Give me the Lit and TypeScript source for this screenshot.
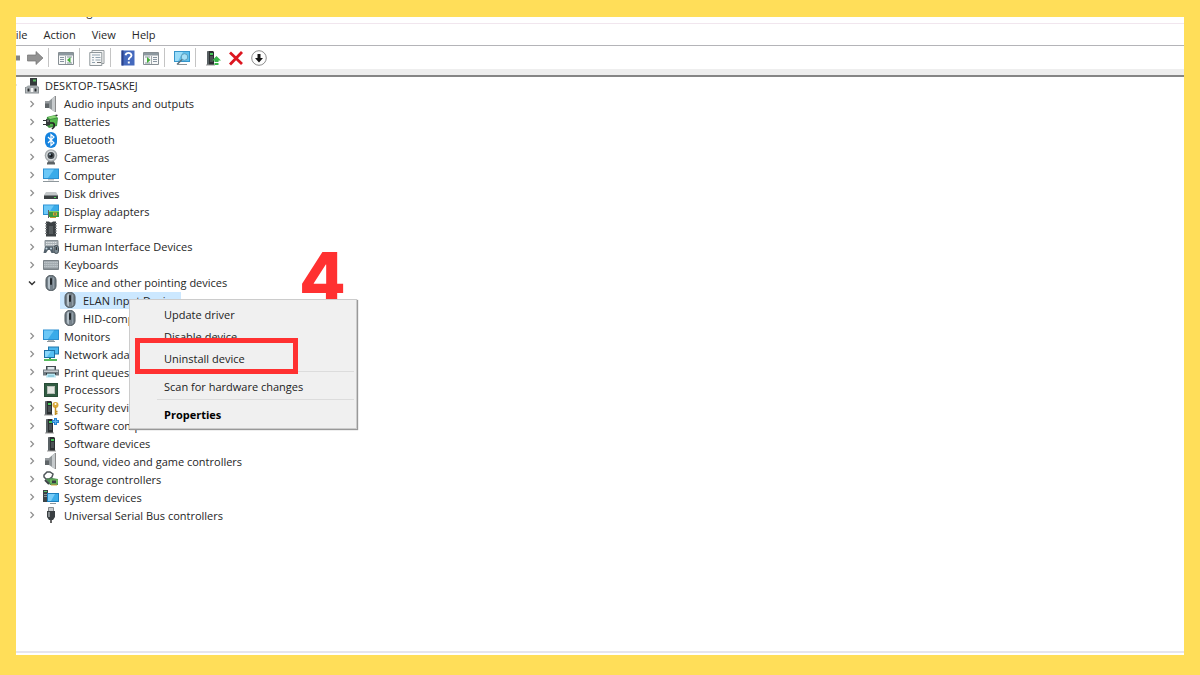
import { LitElement, html, css, svg, nothing } from "lit";
import { customElement, property, state } from "lit/decorators.js";
import { classMap } from "lit/directives/class-map.js";

const tower = (x: number) => svg`
  <path d="M${x} 2l1-1h5l1 1v13h-7z" fill="#2b2f31"/>
  <path d="M${x} 2l1-1h1v14h-2z" fill="#596164"/>
  <path d="M${x + 3} 3h3v2h-3z" fill="#48c75a"/>
  <path d="M${x + 3} 7h3M${x + 3} 9h3M${x + 3} 11h3" stroke="#6d7578"/>
  <path d="M${x - 1} 15h9" stroke="#999"/>`;

const screen = svg`
  <path d="M0 1.500h16v10.500H0z" fill="#2b8fd0"/>
  <path d="M1 2.500h14v8.500H1z" fill="#39abe9"/>
  <path d="M1 2.500h10l-6 8.500H1z" fill="#6cc8f7"/>`;

const mouse = svg`
  <rect x="3" y=".5" width="10" height="15" rx="4.500" fill="#75818a" stroke="#4b545a"/>
  <path d="M5 3.5Q5 2 7 1.5v13Q5 14 5 12z" fill="#b4c0c8"/>
  <path d="M10.500 2.500v11" stroke="#929ea7"/>
  <rect x="7" y="3" width="2" height="7" rx="1" fill="#23282c"/>`;

const speaker = svg`
  <path d="M2 5h4v7H2z" fill="#5f6568"/>
  <path d="M6 5l6-5v16l-6-4z" fill="#8f9598"/>
  <path d="M9 2.500L12 0v16l-3-2z" fill="#c6cacc"/>
  <path d="M12.500 0v16" stroke="#8a8a8a"/>
  <path d="M2 5h4v2.500H2z" fill="#969b9e"/>`;

const ICONS: Record<string, unknown> = {
  root: svg`
    <path d="M6 0h7v9H6z" fill="#34393b"/><path d="M9 1.500h3v2H9z" fill="#55b85f"/>
    <path d="M2 9l2-1.500h9L15 9v6H2z" fill="#a3a9ac"/><path d="M1 9h14v6.500H1z" fill="#8b9194"/>
    <path d="M2 9.500h12v5H2z" fill="#b8bdc0"/>
    <path d="M3.500 10.500h2v3h-2zM10.500 10.500h2v3h-2z" fill="#25292b"/>
    <path d="M7 10h2v4H7z" fill="#f5f5f5"/>`,
  audio: speaker,
  sound: speaker,
  battery: svg`
    <path d="M4 3l8-2 3 3-1 8-8 2-3-3z" fill="#3d9440"/><path d="M5 3l7-1.500 2 2-7 1.500z" fill="#8ad474"/>
    <path d="M7 6l7-1.500-.5 6L7 12z" fill="#54b84c"/><path d="M12 1l2-.5 1 1-2 .7z" fill="#333"/>
    <path d="M0 6h3v-1l4 1v5l-4 1v-1H0v-1h3V7H0z" fill="#33383a"/>
    <path d="M7 9h3q2 1 1 4l-2 2" fill="none" stroke="#222" stroke-width="1.500"/>
    <path d="M4 6.500h2v1H4z" fill="#aaa"/>`,
  bluetooth: svg`
    <rect x="2" y="0" width="12" height="16" rx="6" fill="#1583df"/>
    <path d="M5 5l6 6-3 2.500v-11L11 5l-6 6" fill="none" stroke="#fff" stroke-width="1.200"/>`,
  camera: svg`
    <path d="M4 14l2-3h4l2 3v1.500H4z" fill="#5c6265"/>
    <circle cx="8" cy="6.500" r="6.300" fill="#a5abae"/><circle cx="8" cy="6.500" r="4.900" fill="#d6dadc"/>
    <circle cx="8" cy="6.500" r="3.500" fill="#444b50"/><circle cx="8" cy="6.500" r="1.700" fill="#15191c"/>
    <circle cx="7" cy="5.500" r="1" fill="#9fb6c6"/>`,
  computer: svg`${screen}<path d="M5 12h6v1.500H5z" fill="#c2c6c8"/><path d="M0 14.500h16" stroke="#8e979c"/>`,
  disk: svg`
    <path d="M3 7h10l2 3H1z" fill="#c3c7c9"/><path d="M1 10h14v4H1z" fill="#3c4143"/>
    <path d="M1 10h14v1H1z" fill="#7d8386"/><path d="M11 12h2v1h-2z" fill="#4fd85a"/>`,
  display: svg`${screen}
    <path d="M6 8h10v6H6z" fill="#3a9a41"/><path d="M6 8h10v1H6z" fill="#7fcf6b"/>
    <path d="M10 9.500h4v3h-4z" fill="#d7a935"/><path d="M11 10.500h2v1h-2z" fill="#47555b"/>
    <path d="M7 14.500h6" stroke="#c29a2b"/><path d="M5.500 7v8" stroke="#5b6367"/>`,
  firmware: svg`
    <path d="M3 .5h3q2 2 4 0h3v15H3z" fill="#3b4043"/>
    <path d="M2 2.500h2M2 5h2M2 7.500h2M2 10h2M2 12.500h2M12 2.500h2M12 5h2M12 7.500h2M12 10h2M12 12.500h2" stroke="#85898b"/>
    <path d="M6 5h4v8H6z" fill="#555b5e"/>`,
  hid: svg`
    <path d="M2 1.500h13v6H2z" fill="#a9b1b6" stroke="#8a9398"/>
    <path d="M3 3.500h11M3 5.500h11" stroke="#dfe3e5" stroke-dasharray="1.500 .7"/>
    <path d="M2 7.500h8l1 6.500H8.500L7 11H5l-2 3H.5z" fill="#53616b"/>
    <circle cx="3.500" cy="9.500" r="1" fill="#c2d5e0"/><circle cx="8" cy="9.500" r="1" fill="#c2d5e0"/>
    <rect x="11" y="6.500" width="4.500" height="8" rx="2.200" fill="#7a8992" stroke="#424d54"/><path d="M13.300 8v3" stroke="#222"/>`,
  keyboard: svg`
    <path d="M.5 3.500h15v9H.5z" fill="#a3abb0" stroke="#7b8388"/>
    <path d="M1 5.500h14M1 7.500h14M1 9.500h14" stroke="#bcc4c8" stroke-dasharray="1.400 .4"/><path d="M1 11.500h14" stroke="#8b9398"/>`,
  mouse,
  monitor: svg`${screen}<path d="M5 12h6v1H5z" fill="#acb3b6"/><path d="M4 13.500h8" stroke="#8e979c"/>`,
  network: svg`
    <path d="M5 .5h11v8H5z" fill="#2078ad"/><path d="M6 1.500h9v6H6z" fill="#4db7ee"/>
    <path d="M1 4h11v8H1z" fill="#1d70a5"/><path d="M2 5h9v6H2z" fill="#56bff2"/><path d="M2 5h6l-4 6H2z" fill="#8ad7fa"/>
    <path d="M6 12h2v2H6z" fill="#3b9c45"/><path d="M1 14h13" stroke="#57bb5e" stroke-width="2"/>`,
  printer: svg`
    <path d="M3 2h10v4H3z" fill="#414a4f"/><path d="M4.500 3h7v3h-7z" fill="#dfe7ea"/>
    <path d="M0 5.500h16v6H0z" fill="#707a80"/><path d="M1 6.500h14v1.500H1z" fill="#c4cbcf"/>
    <path d="M3 9h10v2H3z" fill="#242a2d"/><path d="M4 9.500h8l1 4H3z" fill="#b6e6f2"/><path d="M5 12h6" stroke="#6eb2c7"/>`,
  processor: svg`
    <path d="M1 1h14v14H1z" fill="#315c43"/><path d="M1.500 1.500h13v13h-13z" fill="none" stroke="#274c36"/>
    <path d="M4 4h8v8H4z" fill="#b9c0b9"/><path d="M5 5h6v6H5z" fill="#e3e7e2"/>`,
  security: svg`${tower(2)}
    <circle cx="12.500" cy="5" r="3" fill="#d8a83b"/><circle cx="12.500" cy="4" r="1" fill="#fff"/>
    <path d="M12.500 7v8M12.500 11.500h2M12.500 13.500h2" stroke="#c18f25" stroke-width="1.500"/>`,
  component: svg`${tower(3)}
    <path d="M12.500 0v7M9 3.500h7" stroke="#2583d1" stroke-width="3"/>
    <path d="M12.500 1v5M10 3.500h5" stroke="#5db2ee"/>`,
  software: tower(5),
  storage: svg`
    <path d="M1 4l3-3h3l3 2-1 3-3 2H3L1 6z" fill="none" stroke="#4e5558" stroke-width="1.500"/>
    <path d="M3 8l6-1 6 1v6H7z" fill="#4b8f50"/><path d="M7 8.500h8v4H7z" fill="#71b95f"/>
    <path d="M2 9l4 4" stroke="#3c4245" stroke-width="2"/><path d="M9 9.500h4v2.500H9z" fill="#393f42"/>
    <path d="M8 14h6" stroke="#d5aa3d"/>`,
  system: svg`
    <path d="M0 1h5v12H0z" fill="#3c4447"/><path d="M1 2.500h3" stroke="#58c767"/><path d="M1 5.500h3M1 7.500h3" stroke="#899196"/>
    <path d="M4 4h12v9H4z" fill="#1c7fbd"/><path d="M5 5h10v7H5z" fill="#3daeea"/><path d="M5 5h7l-4 7H5z" fill="#79cdf8"/>
    <path d="M7 14.500h6" stroke="#8e979c"/>`,
  usb: svg`
    <path d="M5.500 .5h5v4h-5z" fill="#c7cbcd" stroke="#6e7477" stroke-width=".8"/>
    <path d="M4 4h8v6l-2 3H6l-2-3z" fill="#3a3f42"/><path d="M5 5h2v5H5z" fill="#858b8e"/>
    <path d="M8 13v3" stroke="#333" stroke-width="1.500"/>`,

  back: svg`<path d="M0 8l8-6v3.500h8v5H8V14z" fill="#858585"/>`,
  forward: svg`<path d="M16 8L9 1.500V5H.5v6H9v3.500z" fill="#929292" stroke="#717171" stroke-width=".7"/>`,
  tree: svg`
    <path d="M.5 2.500h15v12H.5z" fill="#f7f8f8" stroke="#868e93"/><path d="M1 3h14v2.500H1z" fill="#8c989f"/>
    <path d="M2 7.500h4M2 9.500h4M2 11.500h4M9 7h5M9 13h5" stroke="#8794a0"/><path d="M7.500 6v8" stroke="#a3aaae"/>
    <path d="M12.500 7v6L9 10z" fill="#42ad39"/>`,
  props: svg`
    <path d="M3 .5h12v13H3z" fill="#f5f6f6" stroke="#969c9f"/><path d="M.8 2.500h12v13H.8z" fill="#f7f8f8" stroke="#8f979b"/>
    <path d="M3 5h8M3 7.500h2M6.500 7.500h5M3 10h2M6.500 10h5M3 12.500h3" stroke="#91a3b0"/><path d="M8 12.500h4" stroke="#777"/>`,
  help: svg`
    <path d="M1.500 .5h13v15h-13z" fill="#4469bd"/><path d="M1.500 .5h2v15h-2z" fill="#2a438c"/>
    <path d="M5.500 5.200Q6 2.800 8.500 2.800T11.500 5.200Q11.500 6.500 10 7.500T8.700 10" fill="none" stroke="#fff" stroke-width="1.800"/><path d="M7.800 11.500h2v2h-2z" fill="#fff"/>`,
  action: svg`
    <path d="M.5 2.500h15v12H.5z" fill="#f7f8f8" stroke="#868e93"/><path d="M1 3h14v2.500H1z" fill="#8c989f"/>
    <path d="M10 7.500h4M10 9.500h4M10 11.500h4M2 7h5M2 13h5" stroke="#8794a0"/><path d="M8.500 6v8" stroke="#a3aaae"/>
    <path d="M4 7v6l3.500-3z" fill="#42ad39"/>`,
  scan: svg`
    <path d="M0 1h16v11H0z" fill="#3695ca"/><path d="M1 2h14v9H1z" fill="#5fc0ed"/><path d="M1 2h8l-5 9H1z" fill="#9adcf8"/>
    <path d="M4 14.500h9" stroke="#8a9297"/><circle cx="10.500" cy="7" r="3.300" fill="#a6e0f7" stroke="#5f9dba"/>
    <path d="M8 9.500l-5 5" stroke="#5b6f7b" stroke-width="1.500"/>`,
  update: svg`${tower(2)}<path d="M11.500 6l4.500 4.500h-2.500V12h-4v-1.500H7z" fill="#38b54a"/><path d="M9.500 13h4v2h-4z" fill="#38b54a"/>`,
  remove: svg`<path d="M2 2.500l12 11.500M14 2L2 14.500" stroke="#dc1620" stroke-width="2.800"/>`,
  disable: svg`
    <circle cx="8" cy="8" r="7.300" fill="#fdfdfd" stroke="#8d8d8d"/>
    <path d="M6.500 4h3v4h2.500l-4 4.500L4 8h2.500z" fill="#151515"/>`,
};

interface Device {
  icon: string;
  label: string;
  level: number;
  open?: boolean;
}

const device = (icon: string, label: string, level = 1, open?: boolean): Device => ({ icon, label, level, open });

const DEVICES: Device[] = [
  device("root", "DESKTOP-T5ASKEJ", 0, true),
  device("audio", "Audio inputs and outputs"),
  device("battery", "Batteries"),
  device("bluetooth", "Bluetooth"),
  device("camera", "Cameras"),
  device("computer", "Computer"),
  device("disk", "Disk drives"),
  device("display", "Display adapters"),
  device("firmware", "Firmware"),
  device("hid", "Human Interface Devices"),
  device("keyboard", "Keyboards"),
  device("mouse", "Mice and other pointing devices", 1, true),
  device("mouse", "ELAN Input Device", 2),
  device("mouse", "HID-compliant mouse", 2),
  device("monitor", "Monitors"),
  device("network", "Network adapters"),
  device("printer", "Print queues"),
  device("processor", "Processors"),
  device("security", "Security devices"),
  device("component", "Software components"),
  device("software", "Software devices"),
  device("sound", "Sound, video and game controllers"),
  device("storage", "Storage controllers"),
  device("system", "System devices"),
  device("usb", "Universal Serial Bus controllers"),
];

const TOOLS: [string, string][][] = [
  [["back", "Back"], ["forward", "Forward"]],
  [["tree", "Show/Hide Console Tree"]],
  [["props", "Properties"]],
  [["help", "Help"], ["action", "Show/Hide Action Pane"]],
  [["scan", "Scan for hardware changes"]],
  [["update", "Update device driver"], ["remove", "Uninstall device"], ["disable", "Disable device"]],
];

@customElement("dm-icon")
export class DmIcon extends LitElement {
  static styles = css`
    :host { display: block; flex: none; width: 16px; height: 16px; }
    .glyph { display: block; width: 100%; height: 100%; }
  `;
  @property() name = "";
  render() {
    return html`<svg class="glyph" viewBox="0 0 16 16" aria-hidden="true">${ICONS[this.name]}</svg>`;
  }
}

@customElement("dm-toolbar")
export class DmToolbar extends LitElement {
  static styles = css`
    :host { display: block; border-top: 1px solid #b4b4b8; border-bottom: 6px solid #eee; }
    .bar { display: flex; height: 23px; margin-left: -16px; }
    .group { display: flex; align-items: center; }
    .group + .group::before { content: ""; width: 1px; height: 19px; margin: 0 5px 0 2px; background: #c4c4c4; }
    .tool { display: grid; place-items: center; width: 23px; height: 22px; padding: 0; border: 0; background: none; }
    .tool:hover { background: #e5f3ff; }
  `;
  render() {
    return html`<div class="bar" role="toolbar" aria-label="Device Manager">
      ${TOOLS.map((group) => html`<div class="group">
        ${group.map(([icon, label]) => html`<button class="tool" aria-label=${label}><dm-icon name=${icon}></dm-icon></button>`)}
      </div>`)}
    </div>`;
  }
}

@customElement("dm-tree")
export class DmTree extends LitElement {
  static styles = css`
    :host { display: block; }
    .tree {
      display: grid; grid-auto-rows: 1fr; min-height: 447px; margin: 0 0 0 -13px; padding: 0;
      list-style: none;
    }
    .row { display: flex; align-items: stretch; white-space: nowrap; }
    .level-1 { padding-left: 19px; }
    .level-2 { padding-left: 38px; }
    .twisty { display: grid; place-items: center; flex: none; width: 19px; padding: 0; border: 0; background: none; }
    .chevron { display: block; width: 8px; height: 8px; fill: none; stroke: #8e8e8e; stroke-width: 1.2; }
    .open { stroke: #333; stroke-width: 1.5; }
    .entry { display: flex; align-items: center; gap: 5px; padding: 0 4px 0 2px; cursor: default; }
    .selected { background: #cce8ff; }
  `;
  @state() private selected = 12;
  render() {
    return html`<ul class="tree" role="tree" aria-label="Devices">
      ${DEVICES.map((d, i) => html`<li class="row level-${d.level}" role="treeitem" aria-level=${d.level + 1}
          aria-selected=${i === this.selected} aria-expanded=${d.level < 2 ? String(!!d.open) : nothing}>
        ${d.level < 2
          ? html`<button class="twisty" aria-label="Toggle ${d.label}">
              <svg class=${classMap({ chevron: true, open: !!d.open })} viewBox="0 0 8 8">
                <path d=${d.open ? "M1 2.500l3 3 3-3" : "M2.500 1l3 3-3 3"} />
              </svg></button>`
          : html`<span class="twisty"></span>`}
        <span class=${classMap({ entry: true, selected: i === this.selected })} @click=${() => (this.selected = i)}>
          <dm-icon name=${d.icon}></dm-icon><span>${d.label}</span>
        </span>
      </li>`)}
    </ul>`;
  }
}

@customElement("dm-context-menu")
export class DmContextMenu extends LitElement {
  static styles = css`
    :host {
      display: block; box-sizing: border-box; width: 228px; padding: 3px 2px;
      background: #f0f0f0; border: 1px solid #ccc; box-shadow: 1px 1px 1px #999;
    }
    .item {
      display: block; width: 100%; height: 22px; padding: 0 0 0 32px; border: 0; background: none;
      color: #1c1c1c; font: inherit; text-align: left; white-space: nowrap;
    }
    .strong { color: #000; font-weight: 700; }
    .rule { height: 1px; margin: 2px 0 3px 25px; border: 0; background: #dcdcdc; }
    .marker { position: absolute; left: 5px; top: 38px; width: 153px; height: 26px; border: 5px solid #ff3131; pointer-events: none; }
  `;
  render() {
    return html`
      <div role="menu" aria-label="Device actions">
        <button class="item" role="menuitem">Update driver</button>
        <button class="item" role="menuitem">Disable device</button>
        <button class="item" role="menuitem">Uninstall device</button>
        <hr class="rule" />
        <button class="item" role="menuitem">Scan for hardware changes</button>
        <hr class="rule" />
        <button class="item strong" role="menuitem">Properties</button>
      </div>
      <div class="marker"></div>`;
  }
}

@customElement("app-root")
export class AppRoot extends LitElement {
  static styles = css`
    :host {
      display: flex; box-sizing: border-box; min-height: 100vh; padding: 17px 16px 20px; background: #ffde59;
      font: 11px/17px "Open Sans", "Noto Sans", sans-serif; color: #262626;
    }
    .window { display: flex; flex: 1; flex-direction: column; min-width: 0; overflow: hidden; background: #fff; }
    .title { display: flex; align-items: flex-end; height: 6px; padding-left: 5px; overflow: hidden; border-bottom: 1px solid #f1e6ee; }
    .title-text { margin: 0 0 3px; font: inherit; }
    .menubar { display: flex; gap: 16px; height: 21px; margin-left: -6px; }
    .menu { padding: 0; border: 0; background: none; color: inherit; font: inherit; }
    .content { position: relative; flex: 1; border-top: 2px solid #858585; border-bottom: 2px solid #e6e5ee; margin-bottom: 2px; }
    .step {
      position: absolute; left: 283px; top: 165px;
      color: #ff3131; font: 800 68px/68px Inter, sans-serif;
    }
    .popup { position: absolute; left: 113px; top: 222px; }
  `;
  render() {
    return html`
      <main class="window">
        <header class="title"><h1 class="title-text">Device Manager</h1></header>
        <nav class="menubar" aria-label="Menu bar">
          ${["File", "Action", "View", "Help"].map((m) => html`<button class="menu">${m}</button>`)}
        </nav>
        <dm-toolbar></dm-toolbar>
        <section class="content">
          <dm-tree></dm-tree>
          <span class="step">4</span>
          <dm-context-menu class="popup"></dm-context-menu>
        </section>
      </main>`;
  }
}
